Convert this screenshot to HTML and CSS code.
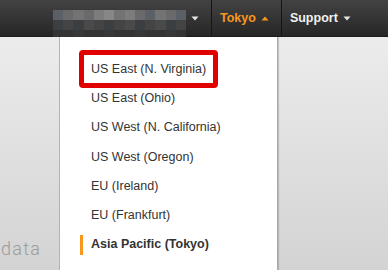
FILE: index.html
```html
<!DOCTYPE html>
<html lang="en">
  <head>
    <meta charset="UTF-8" />
    <title>Region menu</title>
    <link rel="stylesheet" href="styles.css">
  </head>
  <body>
    <header class="topbar">
      <div class="account">
        <div class="blur">
          <span class="b1"></span><span class="b2"></span><span class="b3"></span><span class="b2"></span><span class="b4"></span><span class="b5"></span><span class="b3"></span><span class="b4"></span><span class="b2"></span><span class="b1"></span><span class="b3"></span><span class="b2"></span><span class="b1"></span>
          <span class="d1"></span><span class="d2"></span><span class="d1"></span><span class="d3"></span><span class="d2"></span><span class="d1"></span><span class="d2"></span><span class="d3"></span><span class="d1"></span><span class="d2"></span><span class="d3"></span><span class="d1"></span><span class="d2"></span>
          <span class="e1"></span><span class="e1"></span><span class="e2"></span><span class="e1"></span><span class="e1"></span><span class="e2"></span><span class="e1"></span><span class="e1"></span><span class="e2"></span><span class="e1"></span><span class="e1"></span><span class="e2"></span><span class="e1"></span>
        </div>
        <svg class="caret" width="8" height="5" viewBox="0 0 8 5"><path d="M0.5 0.5h7L4 4.5z" fill="#e6e6e6"/></svg>
      </div>
      <div class="nav-item region">
        Tokyo
        <svg class="caret" width="8" height="5" viewBox="0 0 8 5"><path d="M0.5 4.5h7L4 0.5z" fill="#f7981d"/></svg>
      </div>
      <div class="nav-item">
        Support
        <svg class="caret" width="8" height="5" viewBox="0 0 8 5"><path d="M0.5 0.5h7L4 4.5z" fill="#e6e6e6"/></svg>
      </div>
    </header>

    <main class="content">
      <p class="label">data</p>
    </main>

    <ul class="menu">
      <li class="menu-item"><span class="highlight">US East (N. Virginia)</span></li>
      <li class="menu-item">US East (Ohio)</li>
      <li class="menu-item">US West (N. California)</li>
      <li class="menu-item">US West (Oregon)</li>
      <li class="menu-item">EU (Ireland)</li>
      <li class="menu-item">EU (Frankfurt)</li>
      <li class="menu-item active">Asia Pacific (Tokyo)</li>
    </ul>
  </body>
</html>
```

FILE: styles.css
```css
body {
  font-family: "Liberation Sans", Arial, sans-serif;
  margin: 0;
  padding: 0;
  width: 388px;
  height: 270px;
  overflow: hidden;
  display: flex;
  flex-direction: column;
  background: #e0e0e0;
}

.topbar {
  height: 37px;
  flex-shrink: 0;
  display: flex;
  align-items: stretch;
  padding-left: 53px;
  background: linear-gradient(#434343, #262626);
  border-bottom: 1px solid #1c1c1c;
  box-sizing: border-box;
  color: #f0f0f0;
  font-size: 12.5px;
  font-weight: bold;
}

.account {
  display: flex;
  align-items: center;
  padding-right: 12px;
  border-right: 1px solid #151515;
}

.account .caret {
  margin-left: 5px;
}

.blur {
  width: 133px;
  height: 27px;
  margin-top: 10px;
  align-self: flex-start;
  display: grid;
  grid-template-columns: repeat(13, 1fr);
  grid-template-rows: 10px 10px 7px;
}

.b1 { background: #5b6066; }
.b2 { background: #6a6a6c; }
.b3 { background: #737373; }
.b4 { background: #7c7c7c; }
.b5 { background: #878787; }
.d1 { background: #3c3f42; }
.d2 { background: #444444; }
.d3 { background: #4a4a4a; }
.e1 { background: #343434; }
.e2 { background: #383838; }

.caret {
  margin-left: 5px;
}

.nav-item {
  display: flex;
  align-items: center;
  padding: 0 12px 0 8px;
  border-right: 1px solid #151515;
}

.nav-item:last-child {
  border-right: none;
}

.region {
  color: #f7981d;
}

.content {
  flex: 1;
  background: linear-gradient(#ececec, #d3d3d3);
}

.label {
  margin: 0;
  padding: 201px 0 0 1px;
  font-family: Roboto, "Liberation Sans", sans-serif;
  font-weight: 300;
  font-size: 18px;
  letter-spacing: 1.3px;
  color: #9c9c9c;
}

.menu {
  position: absolute;
  left: 59px;
  top: 37px;
  width: 219px;
  height: 233px;
  box-sizing: border-box;
  margin: 0;
  padding: 17px 0 0 0;
  list-style: none;
  background: #fff;
  border-left: 1px solid #b4b4b4;
  border-right: 1px solid #a8a8a8;
  box-shadow: 1px 0 1px rgba(0, 0, 0, 0.15);
}

.menu-item {
  position: relative;
  display: flex;
  align-items: center;
  height: 29.3px;
  padding-left: 31px;
  font-size: 12.5px;
  color: #333;
}

.highlight {
  margin-left: -12px;
  padding: 0 7px;
  line-height: 28px;
  border: 5px solid #e10000;
  border-radius: 4px;
}

.active {
  font-weight: bold;
}

.active::before {
  content: "";
  position: absolute;
  left: 20px;
  top: 5px;
  width: 3px;
  height: 20px;
  background: #f7981d;
}
```
